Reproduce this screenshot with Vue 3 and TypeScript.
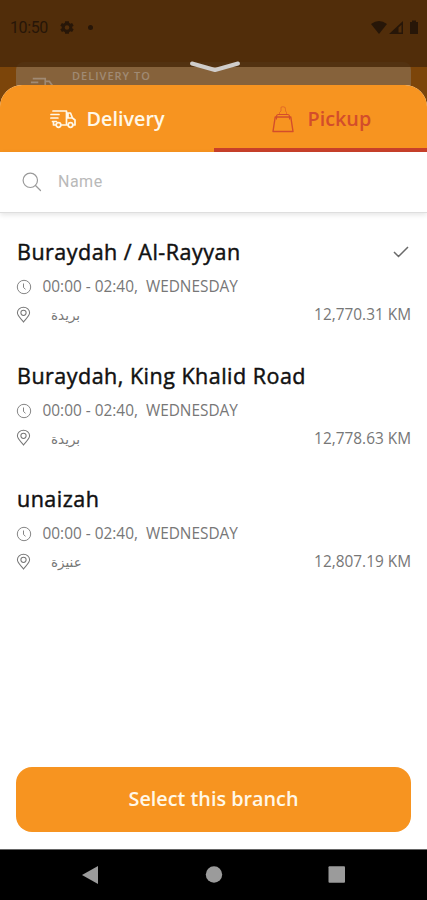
<script setup lang="ts">
import { ref } from 'vue'

interface Branch {
  id: number
  name: string
  hours: string
  day: string
  city: string
  distance: string
}

const branches: Branch[] = [
  { id: 1, name: 'Buraydah / Al-Rayyan', hours: '00:00 - 02:40,', day: 'WEDNESDAY', city: 'بريدة', distance: '12,770.31 KM' },
  { id: 2, name: 'Buraydah, King Khalid Road', hours: '00:00 - 02:40,', day: 'WEDNESDAY', city: 'بريدة', distance: '12,778.63 KM' },
  { id: 3, name: 'unaizah', hours: '00:00 - 02:40,', day: 'WEDNESDAY', city: 'عنيزة', distance: '12,807.19 KM' },
]

const selected = ref(1)
const query = ref('')
</script>

<template>
  <div class="screen">
    <div class="backdrop">
      <div class="address-card">
        <svg class="address-truck" viewBox="0 0 26 20" fill="none" stroke="currentColor" stroke-width="1.8">
          <path d="M3 1.500h13.500v13M1 5.500h8M0 9.500h7M16.500 4.500h4.500l4 5.500v5h-2" />
        </svg>
        <span class="address-label">DELIVERY TO</span>
      </div>
      <div class="status-shade"></div>
    </div>

    <header class="status">
      <span class="time">10:50</span>
      <svg class="gear" viewBox="2 2 20 20" fill="currentColor">
        <path fill-rule="evenodd" d="M19.400 13a7.500 7.500 0 0 0 0-2l2.100-1.600-2.200-3.800-2.500 1a7.500 7.500 0 0 0-1.700-1L14.700 3H9.300l-.4 2.600a7.500 7.500 0 0 0-1.700 1l-2.500-1-2.200 3.800L4.600 11a7.500 7.500 0 0 0 0 2l-2.100 1.600 2.200 3.800 2.500-1c.5.400 1.100.8 1.700 1l.4 2.600h5.400l.4-2.600c.6-.2 1.200-.6 1.700-1l2.500 1 2.200-3.800zM12 15.300a3.300 3.300 0 1 1 0-6.600 3.300 3.300 0 0 1 0 6.600z" />
      </svg>
      <i class="dot"></i>
      <svg class="signals" viewBox="0 0 48 15" fill="currentColor">
        <path d="M0 4Q8-2 16 4L8 14z" />
        <path fill-rule="evenodd" d="M18 14L32 1v13zM27.500 7.500V12.500H30.500V4.700z" />
        <path d="M39 2h2V.5h4V2h2v12h-8z" />
      </svg>
    </header>

    <svg class="handle" viewBox="0 0 52 14" fill="none" stroke-width="4" stroke-linecap="round" stroke-linejoin="round">
      <path d="M3 3.500L26 10L49 3.500" stroke="#d0cdcb" />
    </svg>

    <main class="sheet">
      <nav class="tabs">
        <button class="tab" type="button">
          <svg class="truck" viewBox="0 0 26 20" fill="none" stroke="currentColor" stroke-width="1.700" stroke-linejoin="round" stroke-linecap="round">
            <path d="M3 2h13.500v12.500M1 5.500h8M.9 9h7M2.500 12.500h4M16.500 4h4l2 5 2.500 2v5h-2M17.500 16H11M3.500 13v3H6M18 5v4h4" />
            <circle cx="8.500" cy="16" r="2.300" />
            <circle cx="20.500" cy="16" r="2.300" />
          </svg>
          <span>Delivery</span>
        </button>
        <button class="tab active" type="button">
          <svg class="bag" viewBox="0 0 22 27" fill="none" stroke="currentColor" stroke-width="1.400" stroke-linejoin="round">
            <path d="M3.200 11h15.600L21 25.500H1z" />
            <path d="M4.500 13.500V10.500Q4.500 8.500 6.500 8.500h9q2 0 2 2V13.500" stroke-width="1.100" />
            <path d="M7.500 8.500V6.500L9 5V2.500Q8 .7 11 .7T13.500 3.500V5L14.500 6.500V8.500" stroke-width=".9" opacity=".6" />
          </svg>
          <span>Pickup</span>
        </button>
      </nav>

      <label class="search">
        <svg viewBox="0 0 20 20" fill="none" stroke="currentColor" stroke-width="1.200" stroke-linecap="round">
          <circle cx="8.300" cy="8.300" r="7.200" />
          <path d="M13.500 13.500l5 5" />
        </svg>
        <input v-model="query" type="text" placeholder="Name" />
      </label>

      <ul class="branches">
        <li v-for="branch in branches" :key="branch.id" class="branch" @click="selected = branch.id">
          <div class="heading">
            <h2>{{ branch.name }}</h2>
            <svg v-if="selected === branch.id" class="check" viewBox="0 0 16 12" fill="none" stroke="currentColor" stroke-width="1.500">
              <path d="M1 6l4.500 4.500L15 1" />
            </svg>
          </div>
          <div class="row">
            <svg class="clock" viewBox="0 0 16 16" fill="none" stroke="currentColor">
              <circle cx="8" cy="8" r="6.700" stroke-width=".9" />
              <path d="M7.500 4.500v4l2 1.800" stroke-width=".9" />
            </svg>
            <span class="hours">{{ branch.hours }}</span>
            <span class="day">{{ branch.day }}</span>
          </div>
          <div class="row">
            <svg class="pin" viewBox="0 0 16 18" fill="none" stroke="currentColor" stroke-width="1.100">
              <path d="M8 16.500C5.500 13.200 1.500 10 1.500 6.700a6.500 5.900 0 0 1 13 0c0 3.300-4 6.500-6.500 9.800z" />
              <circle cx="8" cy="6.700" r="2.800" />
            </svg>
            <span class="city" dir="rtl" lang="ar">{{ branch.city }}</span>
            <span class="distance">{{ branch.distance }}</span>
          </div>
        </li>
      </ul>

      <footer class="action">
        <button class="select" type="button">Select this branch</button>
      </footer>
    </main>

    <div class="system-nav">
      <svg viewBox="0 0 18 20"><path d="M0 10L16 1v18z" /></svg>
      <svg viewBox="0 0 18 20"><circle cx="9" cy="9.500" r="8.200" /></svg>
      <svg viewBox="0 0 18 20"><rect x=".5" y="1.300" width="16.500" height="16.500" rx="1" /></svg>
    </div>
  </div>
</template>

<style>
body {
  margin: 0;
  background: #fff;
}
</style>

<style scoped>
.screen {
  position: relative;
  box-sizing: border-box;
  width: 427px;
  height: 900px;
  overflow: hidden;
  display: flex;
  flex-direction: column;
  font-family: "Open Sans", "DejaVu Sans", sans-serif;
  background: #fff;
}
.backdrop {
  position: absolute;
  inset: 0 0 auto;
  height: 120px;
  box-sizing: border-box;
  padding: 62px 16px 0;
  background: #7c450a;
}
.address-card {
  display: flex;
  height: 58px;
  border-radius: 8px;
  background: #86623b;
  color: #a08a74;
}
.address-truck {
  width: 24px;
  height: 19px;
  margin: 15px 0 0 14px;
}
.address-label {
  margin: 6px 0 0 18px;
  font-size: 11px;
  line-height: 15px;
  font-weight: 600;
  letter-spacing: 1px;
}
.status-shade {
  position: absolute;
  inset: 0 0 auto;
  height: 67px;
  background: rgba(75, 42, 11, 0.86);
}
.status {
  position: relative;
  display: flex;
  align-items: center;
  height: 55px;
  padding: 0 8px 0 10px;
  color: #271608;
}
.time {
  width: 50px;
  font: 400 16px/20px Roboto, sans-serif;
  letter-spacing: -0.4px;
}
.gear {
  width: 14px;
  height: 15px;
}
.dot {
  width: 5px;
  height: 5px;
  margin-left: 14px;
  border-radius: 50%;
  background: currentColor;
}
.signals {
  width: 48px;
  height: 15px;
  margin-left: auto;
}
.handle {
  position: relative;
  align-self: center;
  width: 52px;
  height: 14px;
  margin: 5px 0 11px 3px;
}
.sheet {
  position: relative;
  flex: 1;
  min-height: 0;
  display: flex;
  flex-direction: column;
  overflow: hidden;
  border-radius: 22px 22px 0 0;
  background: #fff;
}
.tabs {
  display: grid;
  grid-template-columns: 214px 213px;
  height: 66.500px;
  background: #f79420;
}
.tab {
  display: flex;
  align-items: center;
  box-sizing: border-box;
  padding: 1px 0 0 50px;
  border: 0;
  background: none;
  color: #fff8e8;
  font: 600 19.800px/26px "Open Sans", sans-serif;
}
.tab.active {
  padding: 6px 0 0 58px;
  border-bottom: 4px solid #c8402a;
  color: #d34d2b;
}
.truck {
  width: 26px;
  height: 20px;
  margin-right: 10.500px;
}
.bag {
  width: 22px;
  height: 27px;
  margin-right: 13.500px;
}
.search {
  display: flex;
  align-items: center;
  height: 60px;
  padding: 0 22px;
  border-bottom: 1px solid #dedede;
  box-shadow: 0 2px 5px rgba(0, 0, 0, 0.1);
  color: #9a9a9a;
}
.search svg {
  width: 20px;
  height: 20px;
}
.search input {
  flex: 1;
  padding: 0;
  margin-left: 16px;
  border: 0;
  outline: 0;
  background: transparent;
  color: #333;
  font: 400 16px/22px Roboto, sans-serif;
  letter-spacing: 0.5px;
}
.search input::placeholder {
  color: #b9b9b9;
}
.branches {
  flex: 1;
  margin: 0;
  padding: 24.500px 16px 0;
  list-style: none;
}
.branch {
  height: 123.500px;
}
.heading {
  display: flex;
  align-items: center;
  justify-content: space-between;
  height: 32px;
}
h2 {
  margin: -2px 0 0 1px;
  font-size: 21.500px;
  line-height: 32px;
  font-weight: 400;
  letter-spacing: 0.49px;
  -webkit-text-stroke: 0.45px #111;
  color: #111;
}
.check {
  width: 16px;
  height: 12px;
  margin: -2px 2px 0 0;
  color: #6a6a6a;
}
.row {
  display: flex;
  align-items: center;
  height: 28px;
  padding-top: 8px;
  box-sizing: border-box;
  font-size: 15.400px;
  line-height: 20px;
  color: #777;
  white-space: nowrap;
}
.clock {
  width: 16px;
  height: 16px;
  margin-left: -0.500px;
}
.hours {
  margin-left: 11px;
}
.day {
  margin-left: 8px;
}
.pin {
  width: 15px;
  height: 18px;
  margin-top: -1px;
}
.city {
  margin-left: 20px;
  font-size: 13.500px;
}
.distance {
  margin-left: auto;
}
.action {
  padding: 0 16px 17px;
}
.select {
  width: 100%;
  height: 65px;
  padding: 0 0 1px;
  border: 0;
  border-radius: 16px;
  background: #f79420;
  color: #fff8e8;
  font: 600 19.800px/26px "Open Sans", sans-serif;
}
.system-nav {
  display: grid;
  grid-template-columns: 18px 18px 18px;
  column-gap: 105px;
  justify-content: center;
  align-items: center;
  height: 51px;
  box-sizing: border-box;
  border-top: 1px solid #666;
  background: #000;
}
.system-nav svg {
  width: 18px;
  height: 20px;
  fill: #9b9b9b;
}
</style>
